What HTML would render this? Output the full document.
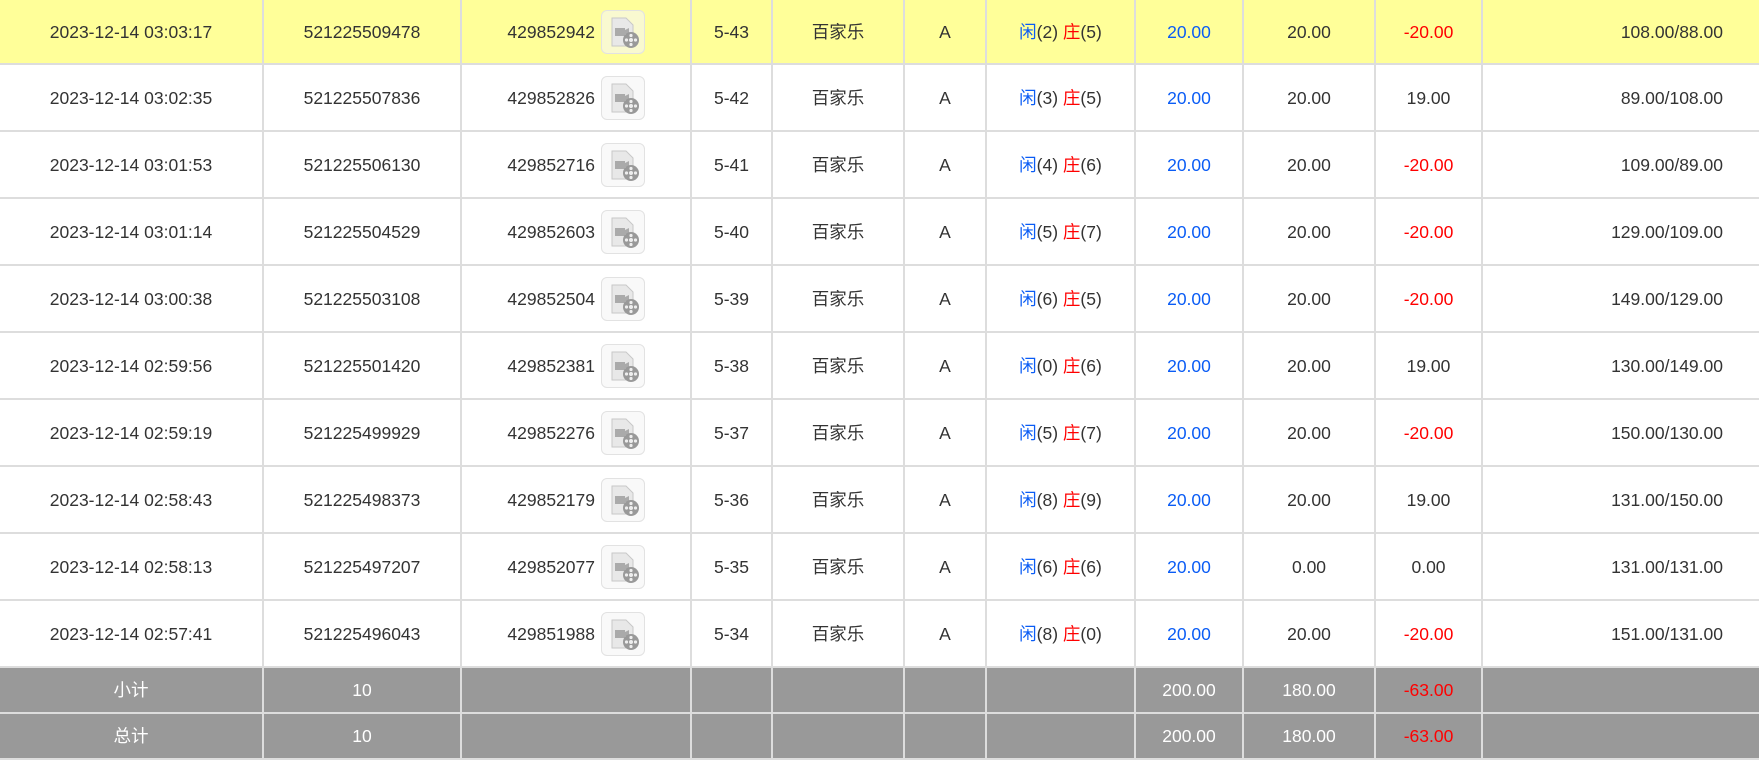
<!DOCTYPE html>
<html><head><meta charset="utf-8"><style>
html,body{margin:0;padding:0;background:#fff;width:1759px;height:763px;overflow:hidden}
table{border-collapse:collapse;table-layout:fixed;width:1759px;font-family:"Liberation Sans","Noto Sans CJK SC",sans-serif;font-size:17.5px;color:#333}
td{border:2px solid #ddd;text-align:center;padding:0;height:65px;line-height:20px;vertical-align:middle}
tr:first-child td{border-top:none}
td:first-child{border-left:none}
td:last-child{border-right:none;text-align:right;padding-right:36px}
tr.hl td{background:#ffff99;height:63px}
td.id{text-align:right;padding-right:45px;position:relative}
.ic{position:absolute;right:45px;top:50%;margin-top:-22px;width:42px;height:42px;border:1px solid #e2e2e2;border-radius:6px;background:rgba(245,245,245,.6)}
td.id span{margin-right:50px}
.b{color:#0a5cf5}.r{color:#f00}
tr.s td{background:#999;color:#fff;height:44px}
tr.s td.r{color:#f00}
</style></head><body>
<table>
<colgroup><col style="width:263px"><col style="width:198px"><col style="width:230px"><col style="width:81px"><col style="width:132px"><col style="width:82px"><col style="width:149px"><col style="width:108px"><col style="width:132px"><col style="width:107px"><col style="width:277px"></colgroup>
<tbody>
<tr class="hl"><td>2023-12-14 03:03:17</td><td>521225509478</td><td class="id"><span>429852942</span><div class="ic"><svg width="42" height="42" viewBox="0 0 42 42"><path d="M10 7h14l7 7v21H10z" fill="#e8e8e8" stroke="#c8c8c8"/><rect x="13" y="17" width="10" height="8" fill="#aaa"/><path d="M23 19l4-2v8l-4-2z" fill="#aaa"/><circle cx="29" cy="29" r="8" fill="#999"/><circle cx="29" cy="29" r="2" fill="#eee"/><circle cx="29" cy="24.5" r="1.6" fill="#eee"/><circle cx="29" cy="33.5" r="1.6" fill="#eee"/><circle cx="24.5" cy="29" r="1.6" fill="#eee"/><circle cx="33.5" cy="29" r="1.6" fill="#eee"/></svg></div></td><td>5-43</td><td>百家乐</td><td>A</td><td><span class="b">闲</span>(2) <span class="r">庄</span>(5)</td><td class="b">20.00</td><td>20.00</td><td class="r">-20.00</td><td>108.00/88.00</td></tr>
<tr><td>2023-12-14 03:02:35</td><td>521225507836</td><td class="id"><span>429852826</span><div class="ic"><svg width="42" height="42" viewBox="0 0 42 42"><path d="M10 7h14l7 7v21H10z" fill="#e8e8e8" stroke="#c8c8c8"/><rect x="13" y="17" width="10" height="8" fill="#aaa"/><path d="M23 19l4-2v8l-4-2z" fill="#aaa"/><circle cx="29" cy="29" r="8" fill="#999"/><circle cx="29" cy="29" r="2" fill="#eee"/><circle cx="29" cy="24.5" r="1.6" fill="#eee"/><circle cx="29" cy="33.5" r="1.6" fill="#eee"/><circle cx="24.5" cy="29" r="1.6" fill="#eee"/><circle cx="33.5" cy="29" r="1.6" fill="#eee"/></svg></div></td><td>5-42</td><td>百家乐</td><td>A</td><td><span class="b">闲</span>(3) <span class="r">庄</span>(5)</td><td class="b">20.00</td><td>20.00</td><td>19.00</td><td>89.00/108.00</td></tr>
<tr><td>2023-12-14 03:01:53</td><td>521225506130</td><td class="id"><span>429852716</span><div class="ic"><svg width="42" height="42" viewBox="0 0 42 42"><path d="M10 7h14l7 7v21H10z" fill="#e8e8e8" stroke="#c8c8c8"/><rect x="13" y="17" width="10" height="8" fill="#aaa"/><path d="M23 19l4-2v8l-4-2z" fill="#aaa"/><circle cx="29" cy="29" r="8" fill="#999"/><circle cx="29" cy="29" r="2" fill="#eee"/><circle cx="29" cy="24.5" r="1.6" fill="#eee"/><circle cx="29" cy="33.5" r="1.6" fill="#eee"/><circle cx="24.5" cy="29" r="1.6" fill="#eee"/><circle cx="33.5" cy="29" r="1.6" fill="#eee"/></svg></div></td><td>5-41</td><td>百家乐</td><td>A</td><td><span class="b">闲</span>(4) <span class="r">庄</span>(6)</td><td class="b">20.00</td><td>20.00</td><td class="r">-20.00</td><td>109.00/89.00</td></tr>
<tr><td>2023-12-14 03:01:14</td><td>521225504529</td><td class="id"><span>429852603</span><div class="ic"><svg width="42" height="42" viewBox="0 0 42 42"><path d="M10 7h14l7 7v21H10z" fill="#e8e8e8" stroke="#c8c8c8"/><rect x="13" y="17" width="10" height="8" fill="#aaa"/><path d="M23 19l4-2v8l-4-2z" fill="#aaa"/><circle cx="29" cy="29" r="8" fill="#999"/><circle cx="29" cy="29" r="2" fill="#eee"/><circle cx="29" cy="24.5" r="1.6" fill="#eee"/><circle cx="29" cy="33.5" r="1.6" fill="#eee"/><circle cx="24.5" cy="29" r="1.6" fill="#eee"/><circle cx="33.5" cy="29" r="1.6" fill="#eee"/></svg></div></td><td>5-40</td><td>百家乐</td><td>A</td><td><span class="b">闲</span>(5) <span class="r">庄</span>(7)</td><td class="b">20.00</td><td>20.00</td><td class="r">-20.00</td><td>129.00/109.00</td></tr>
<tr><td>2023-12-14 03:00:38</td><td>521225503108</td><td class="id"><span>429852504</span><div class="ic"><svg width="42" height="42" viewBox="0 0 42 42"><path d="M10 7h14l7 7v21H10z" fill="#e8e8e8" stroke="#c8c8c8"/><rect x="13" y="17" width="10" height="8" fill="#aaa"/><path d="M23 19l4-2v8l-4-2z" fill="#aaa"/><circle cx="29" cy="29" r="8" fill="#999"/><circle cx="29" cy="29" r="2" fill="#eee"/><circle cx="29" cy="24.5" r="1.6" fill="#eee"/><circle cx="29" cy="33.5" r="1.6" fill="#eee"/><circle cx="24.5" cy="29" r="1.6" fill="#eee"/><circle cx="33.5" cy="29" r="1.6" fill="#eee"/></svg></div></td><td>5-39</td><td>百家乐</td><td>A</td><td><span class="b">闲</span>(6) <span class="r">庄</span>(5)</td><td class="b">20.00</td><td>20.00</td><td class="r">-20.00</td><td>149.00/129.00</td></tr>
<tr><td>2023-12-14 02:59:56</td><td>521225501420</td><td class="id"><span>429852381</span><div class="ic"><svg width="42" height="42" viewBox="0 0 42 42"><path d="M10 7h14l7 7v21H10z" fill="#e8e8e8" stroke="#c8c8c8"/><rect x="13" y="17" width="10" height="8" fill="#aaa"/><path d="M23 19l4-2v8l-4-2z" fill="#aaa"/><circle cx="29" cy="29" r="8" fill="#999"/><circle cx="29" cy="29" r="2" fill="#eee"/><circle cx="29" cy="24.5" r="1.6" fill="#eee"/><circle cx="29" cy="33.5" r="1.6" fill="#eee"/><circle cx="24.5" cy="29" r="1.6" fill="#eee"/><circle cx="33.5" cy="29" r="1.6" fill="#eee"/></svg></div></td><td>5-38</td><td>百家乐</td><td>A</td><td><span class="b">闲</span>(0) <span class="r">庄</span>(6)</td><td class="b">20.00</td><td>20.00</td><td>19.00</td><td>130.00/149.00</td></tr>
<tr><td>2023-12-14 02:59:19</td><td>521225499929</td><td class="id"><span>429852276</span><div class="ic"><svg width="42" height="42" viewBox="0 0 42 42"><path d="M10 7h14l7 7v21H10z" fill="#e8e8e8" stroke="#c8c8c8"/><rect x="13" y="17" width="10" height="8" fill="#aaa"/><path d="M23 19l4-2v8l-4-2z" fill="#aaa"/><circle cx="29" cy="29" r="8" fill="#999"/><circle cx="29" cy="29" r="2" fill="#eee"/><circle cx="29" cy="24.5" r="1.6" fill="#eee"/><circle cx="29" cy="33.5" r="1.6" fill="#eee"/><circle cx="24.5" cy="29" r="1.6" fill="#eee"/><circle cx="33.5" cy="29" r="1.6" fill="#eee"/></svg></div></td><td>5-37</td><td>百家乐</td><td>A</td><td><span class="b">闲</span>(5) <span class="r">庄</span>(7)</td><td class="b">20.00</td><td>20.00</td><td class="r">-20.00</td><td>150.00/130.00</td></tr>
<tr><td>2023-12-14 02:58:43</td><td>521225498373</td><td class="id"><span>429852179</span><div class="ic"><svg width="42" height="42" viewBox="0 0 42 42"><path d="M10 7h14l7 7v21H10z" fill="#e8e8e8" stroke="#c8c8c8"/><rect x="13" y="17" width="10" height="8" fill="#aaa"/><path d="M23 19l4-2v8l-4-2z" fill="#aaa"/><circle cx="29" cy="29" r="8" fill="#999"/><circle cx="29" cy="29" r="2" fill="#eee"/><circle cx="29" cy="24.5" r="1.6" fill="#eee"/><circle cx="29" cy="33.5" r="1.6" fill="#eee"/><circle cx="24.5" cy="29" r="1.6" fill="#eee"/><circle cx="33.5" cy="29" r="1.6" fill="#eee"/></svg></div></td><td>5-36</td><td>百家乐</td><td>A</td><td><span class="b">闲</span>(8) <span class="r">庄</span>(9)</td><td class="b">20.00</td><td>20.00</td><td>19.00</td><td>131.00/150.00</td></tr>
<tr><td>2023-12-14 02:58:13</td><td>521225497207</td><td class="id"><span>429852077</span><div class="ic"><svg width="42" height="42" viewBox="0 0 42 42"><path d="M10 7h14l7 7v21H10z" fill="#e8e8e8" stroke="#c8c8c8"/><rect x="13" y="17" width="10" height="8" fill="#aaa"/><path d="M23 19l4-2v8l-4-2z" fill="#aaa"/><circle cx="29" cy="29" r="8" fill="#999"/><circle cx="29" cy="29" r="2" fill="#eee"/><circle cx="29" cy="24.5" r="1.6" fill="#eee"/><circle cx="29" cy="33.5" r="1.6" fill="#eee"/><circle cx="24.5" cy="29" r="1.6" fill="#eee"/><circle cx="33.5" cy="29" r="1.6" fill="#eee"/></svg></div></td><td>5-35</td><td>百家乐</td><td>A</td><td><span class="b">闲</span>(6) <span class="r">庄</span>(6)</td><td class="b">20.00</td><td>0.00</td><td>0.00</td><td>131.00/131.00</td></tr>
<tr><td>2023-12-14 02:57:41</td><td>521225496043</td><td class="id"><span>429851988</span><div class="ic"><svg width="42" height="42" viewBox="0 0 42 42"><path d="M10 7h14l7 7v21H10z" fill="#e8e8e8" stroke="#c8c8c8"/><rect x="13" y="17" width="10" height="8" fill="#aaa"/><path d="M23 19l4-2v8l-4-2z" fill="#aaa"/><circle cx="29" cy="29" r="8" fill="#999"/><circle cx="29" cy="29" r="2" fill="#eee"/><circle cx="29" cy="24.5" r="1.6" fill="#eee"/><circle cx="29" cy="33.5" r="1.6" fill="#eee"/><circle cx="24.5" cy="29" r="1.6" fill="#eee"/><circle cx="33.5" cy="29" r="1.6" fill="#eee"/></svg></div></td><td>5-34</td><td>百家乐</td><td>A</td><td><span class="b">闲</span>(8) <span class="r">庄</span>(0)</td><td class="b">20.00</td><td>20.00</td><td class="r">-20.00</td><td>151.00/131.00</td></tr>
<tr class="s"><td>小计</td><td>10</td><td></td><td></td><td></td><td></td><td></td><td>200.00</td><td>180.00</td><td class="r">-63.00</td><td></td></tr>
<tr class="s"><td>总计</td><td>10</td><td></td><td></td><td></td><td></td><td></td><td>200.00</td><td>180.00</td><td class="r">-63.00</td><td></td></tr>
</tbody></table>
</body></html>
